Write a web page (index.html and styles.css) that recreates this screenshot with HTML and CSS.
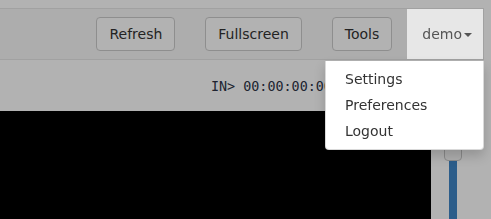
FILE: index.html
```html
<!DOCTYPE html>
<html>
<head>
<meta charset="utf-8">
<link rel="stylesheet" href="styles.css">
</head>
<body>
<nav class="navbar">
  <div class="nav-actions">
    <button class="btn">Refresh</button>
    <button class="btn btn-full">Fullscreen</button>
    <button class="btn btn-tools">Tools</button>
  </div>
  <div class="user-menu">
    <a class="user-toggle">demo<span class="caret"></span></a>
    <ul class="dropdown">
      <li>Settings</li>
      <li>Preferences</li>
      <li>Logout</li>
    </ul>
  </div>
</nav>
<div class="info-row"><span class="timecode">IN&gt; 00:00:00:00</span></div>
<div class="stage">
  <div class="video"></div>
  <div class="slider-col">
    <div class="slider">
      <div class="handle"></div>
      <div class="track"></div>
    </div>
  </div>
</div>
<div class="backdrop"></div>
</body>
</html>
```
FILE: styles.css
```css
html, body {
  margin: 0;
  height: 100%;
  overflow: hidden;
}
body {
  padding-top: 8px;
  box-sizing: border-box;
  background: #fff;
  font-family: "DejaVu Sans", Verdana, sans-serif;
  font-size: 14px;
  color: #333;
  display: flex;
  flex-direction: column;
}
.navbar {
  display: flex;
  align-items: flex-start;
  height: 50px;
  margin-right: 7px;
  background: #f8f8f8;
  border: 1px solid #e7e7e7;
  border-left: 0;
  flex: none;
}
.nav-actions {
  margin-left: auto;
  display: flex;
  padding-top: 8px;
  margin-right: 15px;
}
.btn {
  font-family: inherit;
  font-size: 14px;
  line-height: 20px;
  height: 34px;
  padding: 6px 12px;
  color: #333;
  background: #fff;
  border: 1px solid #ccc;
  border-radius: 4px;
  box-sizing: border-box;
}
.btn-full { margin-left: 30px; }
.btn-tools { margin-left: 30px; }
.user-menu {
  position: relative;
  z-index: 20;
}
.user-toggle {
  display: flex;
  align-items: center;
  height: 50px;
  padding: 0 11px 0 15px;
  box-sizing: border-box;
  background: #e7e7e7;
  color: #555;
  line-height: 20px;
}
.caret {
  display: inline-block;
  width: 0;
  height: 0;
  margin-left: 2px;
  margin-top: 1px;
  border-top: 4px solid #555;
  border-left: 4px solid transparent;
  border-right: 4px solid transparent;
}
.dropdown {
  position: absolute;
  top: 52px;
  right: -1px;
  width: 157px;
  margin: 0;
  padding: 5px 0;
  list-style: none;
  background: #fff;
  border: 1px solid rgba(0,0,0,.15);
  border-top: 0;
  border-radius: 0 0 4px 4px;
  box-shadow: 0 6px 12px rgba(0,0,0,.175);
}
.dropdown li {
  padding: 3px 19px;
  line-height: 20px;
  color: #333;
  white-space: nowrap;
}
.info-row {
  height: 51px;
  flex: none;
  display: flex;
  align-items: center;
  padding-left: 211px;
  padding-top: 2px;
  box-sizing: border-box;
}
.timecode {
  font-family: "DejaVu Sans Mono", "Liberation Mono", monospace;
  font-size: 13.4px;
  color: #2d3346;
  white-space: nowrap;
}
.stage {
  flex: 1;
  display: flex;
}
.video {
  width: 431px;
  background: #000;
}
.slider-col {
  flex: 1;
  display: flex;
  padding-left: 13px;
}
.slider {
  width: 18px;
  display: flex;
  flex-direction: column;
  align-items: center;
  padding-top: 26px;
}
.handle {
  width: 18px;
  height: 24px;
  box-sizing: border-box;
  background: #fbfbfb;
  border: 1px solid #c8c8c8;
  border-radius: 0 0 4px 4px;
  flex: none;
}
.track {
  width: 8px;
  flex: 1;
  background: #3f86c6;
}
.backdrop {
  position: fixed;
  inset: 0;
  background: rgba(0,0,0,.3);
  z-index: 10;
}
```
